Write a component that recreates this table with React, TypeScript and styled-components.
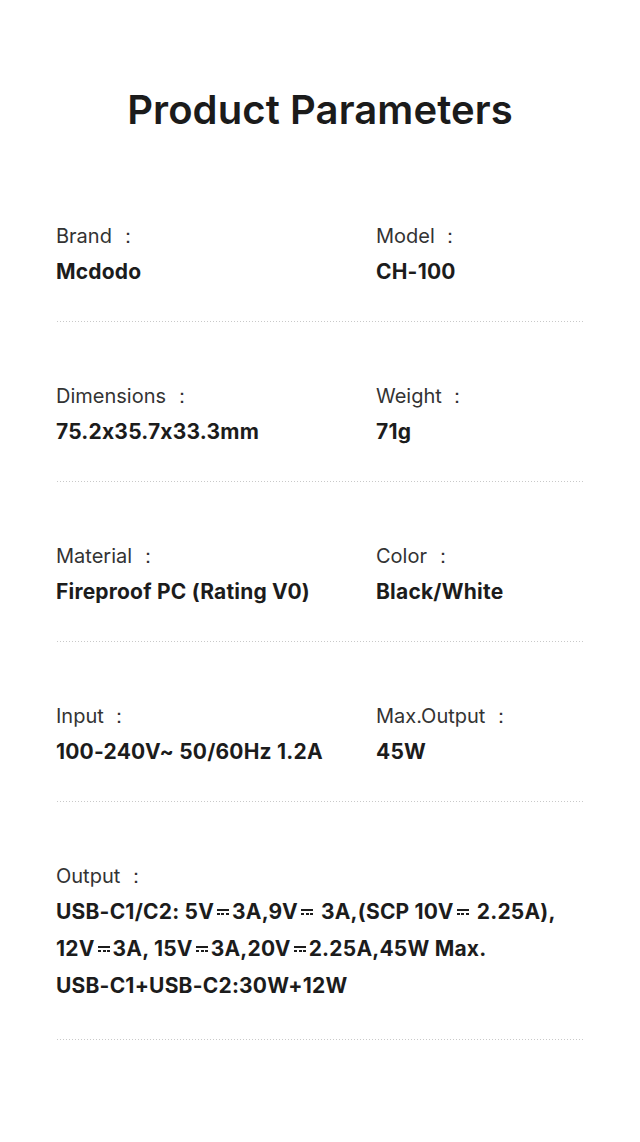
import React from "react";
import styled, { createGlobalStyle } from "styled-components";

const Global = createGlobalStyle`
  html, body { margin: 0; padding: 0; background: #ffffff; }
  body {
    font-family: Inter, "Noto Sans", "Liberation Sans", sans-serif;
    font-feature-settings: "calt" 0;
  }
`;

const Page = styled.div`
  width: 640px;
  min-height: 1142px;
  background: #ffffff;
  padding: 86px 56px 0 56px;
  box-sizing: border-box;
`;

const Title = styled.h1`
  margin: 0 0 88px 0;
  text-align: center;
  font-size: 40px;
  line-height: 48px;
  font-weight: 600;
  color: #1b1b1b;
  letter-spacing: 0.1px;
`;

const Row = styled.section<{ $pb: number }>`
  display: grid;
  grid-template-columns: 320px 1fr;
  width: 528px;
  padding-bottom: ${(p) => p.$pb}px;
  margin-bottom: 60px;
  background-image: radial-gradient(circle, #c9c9c9 0.7px, transparent 0.8px);
  background-size: 3px 1px;
  background-repeat: repeat-x;
  background-position: 0 100%;
`;

const Cell = styled.div<{ $span?: boolean }>`
  display: flex;
  flex-direction: column;
  gap: ${(p) => (p.$span ? 3 : 8)}px;
  grid-column: ${(p) => (p.$span ? "1 / -1" : "auto")};
`;

const Label = styled.div`
  font-size: 20px;
  line-height: 28px;
  font-weight: 400;
  color: #333333;
  white-space: nowrap;
`;

const Value = styled.div<{ $lh?: number }>`
  font-size: 21px;
  line-height: ${(p) => p.$lh ?? 28}px;
  font-weight: 700;
  color: #1c1c1c;
  white-space: nowrap;
  letter-spacing: 0.2px;
`;

const DC = styled.span`
  display: inline-block;
  position: relative;
  width: 12px;
  height: 6px;
  margin: 0 3px;
  vertical-align: 4px;
  border-top: 2px solid #1c1c1c;
  box-sizing: border-box;
  &::after {
    content: "";
    position: absolute;
    left: 0;
    right: 0;
    bottom: 0;
    height: 2px;
    background: repeating-linear-gradient(
      to right,
      #1c1c1c 0 3px,
      transparent 3px 4.5px
    );
  }
`;

const items: [string, string, string, string][] = [
  ["Brand", "Mcdodo", "Model", "CH-100"],
  ["Dimensions", "75.2x35.7x33.3mm", "Weight", "71g"],
  ["Material", "Fireproof PC (Rating V0)", "Color", "Black/White"],
  ["Input", "100-240V~ 50/60Hz 1.2A", "Max.Output", "45W"],
];

export default function App() {
  return (
    <>
      <Global />
      <Page>
        <Title>Product Parameters</Title>
        {items.map(([l1, v1, l2, v2]) => (
          <Row key={l1} $pb={36}>
            <Cell>
              <Label>{l1} ：</Label>
              <Value>{v1}</Value>
            </Cell>
            <Cell>
              <Label>{l2} ：</Label>
              <Value>{v2}</Value>
            </Cell>
          </Row>
        ))}
        <Row $pb={36}>
          <Cell $span>
            <Label>Output ：</Label>
            <Value $lh={37}>
              USB-C1/C2: 5V<DC />3A,9V<DC /> 3A,(SCP 10V<DC /> 2.25A),
              <br />
              12V<DC />3A, 15V<DC />3A,20V<DC />2.25A,45W Max.
              <br />
              USB-C1+USB-C2:30W+12W
            </Value>
          </Cell>
        </Row>
      </Page>
    </>
  );
}
